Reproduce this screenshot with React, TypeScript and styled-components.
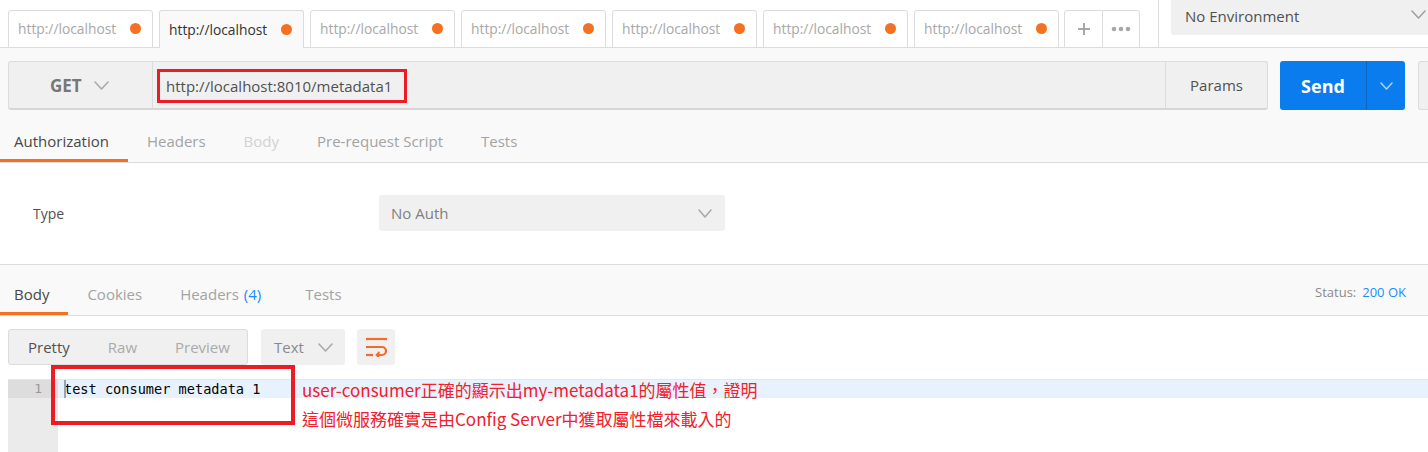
import React from "react";
import styled, { createGlobalStyle } from "styled-components";

const Global = createGlobalStyle`
  html, body { margin: 0; padding: 0; background: #ffffff; }
  body { font-family: "Open Sans", "Noto Sans", sans-serif; }
  #root { height: 452px; overflow: hidden; }
  * { box-sizing: border-box; }
`;

const Page = styled.div`
  display: flex;
  flex-direction: column;
  height: 452px;
  width: 1428px;
  overflow: hidden;
`;

/* ---------- top tab bar ---------- */
const TopBar = styled.div`
  display: flex;
  height: 48px;
  background: #ffffff;
  border-bottom: 1px solid #dcdcdc;
  flex-shrink: 0;
`;

const TabStrip = styled.div`
  display: flex;
  align-items: flex-end;
  gap: 6px;
  padding-left: 8px;
`;

const ReqTab = styled.div<{ $active?: boolean }>`
  width: 145px;
  height: 38px;
  margin-bottom: -1px;
  display: flex;
  align-items: center;
  justify-content: space-between;
  padding: 0 11px 1px 9px;
  border: 1px solid #dcdcdc;
  border-bottom: ${(p) => (p.$active ? "none" : "1px solid #dcdcdc")};
  border-radius: 3px 3px 0 0;
  background: ${(p) => (p.$active ? "#f9f9f9" : "#ffffff")};
  color: ${(p) => (p.$active ? "#333333" : "#a8a8a8")};
  font-size: 13.8px;
`;

const Dot = styled.span`
  width: 11px;
  height: 11px;
  border-radius: 50%;
  background: #f47023;
`;

const TabTools = styled.div`
  display: flex;
  height: 38px;
  margin-left: 5px;
  margin-bottom: -1px;
  align-self: flex-end;
  border: 1px solid #dcdcdc;
  border-radius: 3px 3px 0 0;
  background: #ffffff;
`;

const ToolCell = styled.div<{ $divider?: boolean }>`
  width: 37px;
  display: flex;
  align-items: center;
  justify-content: center;
  border-left: ${(p) => (p.$divider ? "1px solid #dcdcdc" : "none")};
`;

const VSep = styled.div`
  width: 1px;
  background: #dcdcdc;
  margin-left: 18px;
`;

const EnvSelect = styled.div`
  flex: 1;
  margin-left: 12px;
  height: 35px;
  background: #f0f0f0;
  border-radius: 0 0 0 3px;
  display: flex;
  align-items: center;
  padding: 0 0 3px 14px;
  font-size: 15px;
  color: #505050;
  position: relative;
`;

const EnvChevron = styled.span`
  position: absolute;
  right: 2px;
  top: 10px;
  display: flex;
`;

/* ---------- request builder ---------- */
const RequestArea = styled.div`
  background: #f9f9f9;
  flex-shrink: 0;
`;

const RequestRow = styled.div`
  display: flex;
  align-items: stretch;
  padding: 13px 0 0 8px;
  height: 62px;
`;

const UrlGroup = styled.div`
  display: flex;
  width: 1260px;
  border: 1px solid #dcdcdc;
  border-bottom: 2px solid #d6d6d6;
  border-radius: 3px;
  background: #f0f0f0;
`;

const MethodBox = styled.div`
  width: 144px;
  display: flex;
  align-items: center;
  padding-left: 41px;
  gap: 12px;
  font-size: 17px;
  font-weight: 700;
  color: #777777;
  border-right: 1px solid #dcdcdc;
`;

const UrlField = styled.div`
  flex: 1;
  display: flex;
  align-items: center;
  padding-left: 4px;
`;

const UrlMark = styled.span`
  display: inline-flex;
  align-items: center;
  height: 34px;
  padding: 0 0 0 6px;
  width: 250px;
  border: 3px solid #ed1c24;
  font-size: 15px;
  color: #505050;
  margin-top: 1px;
`;

const ParamsBtn = styled.div`
  width: 102px;
  display: flex;
  align-items: center;
  justify-content: center;
  border-left: 1px solid #dcdcdc;
  font-size: 15px;
  color: #505050;
`;

const SendBtn = styled.div`
  display: flex;
  margin-left: 12px;
  width: 125px;
  background: #0b7ced;
  border-radius: 3px;
`;

const SendMain = styled.div`
  width: 87px;
  display: flex;
  align-items: center;
  justify-content: center;
  color: #ffffff;
  font-size: 18px;
  font-weight: 700;
  border-right: 1px solid #0a66c2;
`;

const SendArrow = styled.div`
  flex: 1;
  display: flex;
  align-items: center;
  justify-content: center;
`;

const SaveStub = styled.div`
  margin-left: 13px;
  flex: 1;
  background: #f0f0f0;
  border: 1px solid #dcdcdc;
  border-right: none;
  border-radius: 3px 0 0 3px;
`;

const TabsRow = styled.div<{ $top: number }>`
  display: flex;
  align-items: stretch;
  height: ${(p) => p.$top + 43}px;
  padding-top: ${(p) => p.$top}px;
  border-bottom: 1px solid #dcdcdc;
  background: #f9f9f9;
  flex-shrink: 0;
`;

const SubTab = styled.div<{ $state: "active" | "idle" | "disabled"; $extra?: number }>`
  position: relative;
  display: flex;
  align-items: center;
  padding: 0 ${(p) => 19 + (p.$extra ?? 0)}px 1px 19px;
  font-size: 15px;
  color: ${(p) =>
    p.$state === "active" ? "#484848" : p.$state === "disabled" ? "#d2d2d2" : "#a3a3a3"};
  &:first-child { padding-left: 14px; }
  &::after {
    content: "";
    display: ${(p) => (p.$state === "active" ? "block" : "none")};
    position: absolute;
    left: 0;
    right: 0;
    bottom: 0;
    height: 3px;
    background: #f47023;
  }
`;

const Count = styled.span`
  color: #1a8cff;
  margin-left: 5px;
`;

const Spacer = styled.div`
  flex: 1;
`;

const Status = styled.div`
  display: flex;
  align-items: center;
  gap: 6px;
  padding-right: 22px;
  padding-bottom: 4px;
  font-size: 13px;
  color: #8a8a8a;
`;

const StatusValue = styled.span`
  color: #1a8cff;
`;

/* ---------- auth panel ---------- */
const AuthPanel = styled.div`
  background: #ffffff;
  display: flex;
  align-items: center;
  padding: 32px 0 33px 33px;
  border-bottom: 1px solid #dcdcdc;
  flex-shrink: 0;
`;

const FieldLabel = styled.div`
  width: 346px;
  font-size: 14px;
  color: #505050;
`;

const Select = styled.div<{ $w: number }>`
  width: ${(p) => p.$w}px;
  height: 36px;
  background: #f0f0f0;
  border-radius: 3px;
  display: flex;
  align-items: center;
  justify-content: space-between;
  padding: 0 13px 0 12px;
  font-size: 15px;
  color: #808080;
`;

/* ---------- response ---------- */
const ResponseBody = styled.div`
  flex: 1;
  background: #ffffff;
  padding: 13px 0 0 8px;
  display: flex;
  flex-direction: column;
`;

const Toolbar = styled.div`
  display: flex;
  gap: 12px;
  height: 36px;
  flex-shrink: 0;
`;

const Segmented = styled.div`
  display: flex;
  border: 1px solid #dcdcdc;
  border-radius: 3px;
  background: #f0f0f0;
  width: 240px;
`;

const SegBtn = styled.div<{ $active?: boolean }>`
  display: flex;
  align-items: center;
  padding: 0 19px;
  font-size: 15px;
  color: ${(p) => (p.$active ? "#505050" : "#aaaaaa")};
`;

const TypeSelect = styled.div`
  width: 84px;
  margin-left: 1px;
  background: #f0f0f0;
  border-radius: 3px;
  display: flex;
  align-items: center;
  justify-content: space-between;
  padding: 0 12px 0 13px;
  font-size: 15px;
  color: #8a8a8a;
`;

const IconBtn = styled.div`
  width: 38px;
  background: #f0f0f0;
  border-radius: 3px;
  display: flex;
  align-items: center;
  justify-content: center;
`;

const Editor = styled.div`
  position: relative;
  margin-top: 14px;
  flex: 1;
  display: flex;
  border-top: 1px solid #e6e6e6;
`;

const Gutter = styled.div`
  width: 50px;
  background: #ebebeb;
  border-radius: 3px 0 0 0;
`;

const GutterLine = styled.div<{ $current?: boolean }>`
  height: 18px;
  line-height: 18px;
  text-align: right;
  padding-right: 16px;
  font-family: "DejaVu Sans Mono", monospace;
  font-size: 13px;
  color: #999999;
  background: ${(p) => (p.$current ? "#dddddd" : "transparent")};
`;

const Code = styled.div`
  flex: 1;
`;

const CodeLine = styled.div<{ $current?: boolean }>`
  position: relative;
  height: 18px;
  line-height: 18px;
  padding-left: 6px;
  font-family: "DejaVu Sans Mono", "Liberation Mono", monospace;
  font-size: 13.6px;
  color: #000000;
  white-space: pre;
  background: ${(p) => (p.$current ? "#e8f2fe" : "transparent")};
`;

const Cursor = styled.span`
  position: absolute;
  left: 6px;
  top: 0;
  width: 2px;
  height: 18px;
  background: #9aa4b0;
`;

const MarkBox = styled.div`
  position: absolute;
  left: 43px;
  top: -15px;
  width: 244px;
  height: 60px;
  border: 4px solid #ed1c24;
  pointer-events: none;
`;

const Note = styled.div`
  position: absolute;
  left: 294px;
  top: -5px;
  font-family: "Noto Sans CJK TC", "Noto Sans", sans-serif;
  font-size: 17px;
  line-height: 29px;
  color: #f0202c;
  white-space: nowrap;
`;

const Chevron = ({ w, h, color, sw = 1.6 }: { w: number; h: number; color: string; sw?: number }) => (
  <svg width={w} height={h} viewBox={`0 0 ${w} ${h}`} fill="none">
    <polyline
      points={`1,1 ${w / 2},${h - 1} ${w - 1},1`}
      stroke={color}
      strokeWidth={sw}
      strokeLinecap="round"
      strokeLinejoin="round"
    />
  </svg>
);

const WrapIcon = () => (
  <svg width="21" height="20" viewBox="0 0 21 20" fill="none" stroke="#f26b2a" strokeWidth="2.2">
    <line x1="0" y1="2" x2="21" y2="2" />
    <path d="M0 10 H16 a4 4 0 0 1 0 8 H11" />
    <polyline points="13.5,15 10.5,18 13.5,21" strokeWidth="1.8" />
    <line x1="0" y1="18" x2="7" y2="18" />
  </svg>
);

const tabs = [false, true, false, false, false, false, false];

export default function App() {
  return (
    <Page>
      <Global />
      <TopBar>
        <TabStrip>
          {tabs.map((a, i) => (
            <ReqTab key={i} $active={a}>
              <span>http://localhost</span>
              <Dot />
            </ReqTab>
          ))}
        </TabStrip>
        <TabTools>
          <ToolCell>
            <svg width="12" height="12" viewBox="0 0 12 12" stroke="#a0a0a0" strokeWidth="1.8">
              <line x1="6" y1="0" x2="6" y2="12" />
              <line x1="0" y1="6" x2="12" y2="6" />
            </svg>
          </ToolCell>
          <ToolCell $divider>
            <svg width="20" height="6" viewBox="0 0 20 6" fill="#a8a8a8">
              <circle cx="3" cy="3" r="2.3" />
              <circle cx="10" cy="3" r="2.3" />
              <circle cx="17" cy="3" r="2.3" />
            </svg>
          </ToolCell>
        </TabTools>
        <VSep />
        <EnvSelect>
          No Environment
          <EnvChevron>
            <Chevron w={15} h={9} color="#a0a0a0" />
          </EnvChevron>
        </EnvSelect>
      </TopBar>

      <RequestArea>
        <RequestRow>
          <UrlGroup>
            <MethodBox>
              GET
              <Chevron w={15} h={9} color="#aaaaaa" />
            </MethodBox>
            <UrlField>
              <UrlMark>http://localhost:8010/metadata1</UrlMark>
            </UrlField>
            <ParamsBtn>Params</ParamsBtn>
          </UrlGroup>
          <SendBtn>
            <SendMain>Send</SendMain>
            <SendArrow>
              <Chevron w={13} h={8} color="#a9cdf5" />
            </SendArrow>
          </SendBtn>
          <SaveStub />
        </RequestRow>
        <TabsRow $top={10}>
          <SubTab $state="active">Authorization</SubTab>
          <SubTab $state="idle">Headers</SubTab>
          <SubTab $state="disabled">Body</SubTab>
          <SubTab $state="idle">Pre-request Script</SubTab>
          <SubTab $state="idle">Tests</SubTab>
        </TabsRow>
      </RequestArea>

      <AuthPanel>
        <FieldLabel>Type</FieldLabel>
        <Select $w={346}>
          No Auth
          <Chevron w={14} h={9} color="#aaaaaa" />
        </Select>
      </AuthPanel>

      <TabsRow $top={8}>
        <SubTab $state="active">Body</SubTab>
        <SubTab $state="idle">Cookies</SubTab>
        <SubTab $state="idle" $extra={6}>
          Headers<Count>(4)</Count>
        </SubTab>
        <SubTab $state="idle">Tests</SubTab>
        <Spacer />
        <Status>
          Status: <StatusValue>200 OK</StatusValue>
        </Status>
      </TabsRow>

      <ResponseBody>
        <Toolbar>
          <Segmented>
            <SegBtn $active>Pretty</SegBtn>
            <SegBtn>Raw</SegBtn>
            <SegBtn>Preview</SegBtn>
          </Segmented>
          <TypeSelect>
            Text
            <Chevron w={15} h={9} color="#aaaaaa" />
          </TypeSelect>
          <IconBtn>
            <WrapIcon />
          </IconBtn>
        </Toolbar>
        <Editor>
          <Gutter>
            <GutterLine $current>1</GutterLine>
          </Gutter>
          <Code>
            <CodeLine $current>
              <Cursor />
              test consumer metadata 1
            </CodeLine>
          </Code>
          <MarkBox />
          <Note>
            user-consumer正確的顯示出my-metadata1的屬性值，證明
            <br />
            這個微服務確實是由Config Server中獲取屬性檔來載入的
          </Note>
        </Editor>
      </ResponseBody>
    </Page>
  );
}
